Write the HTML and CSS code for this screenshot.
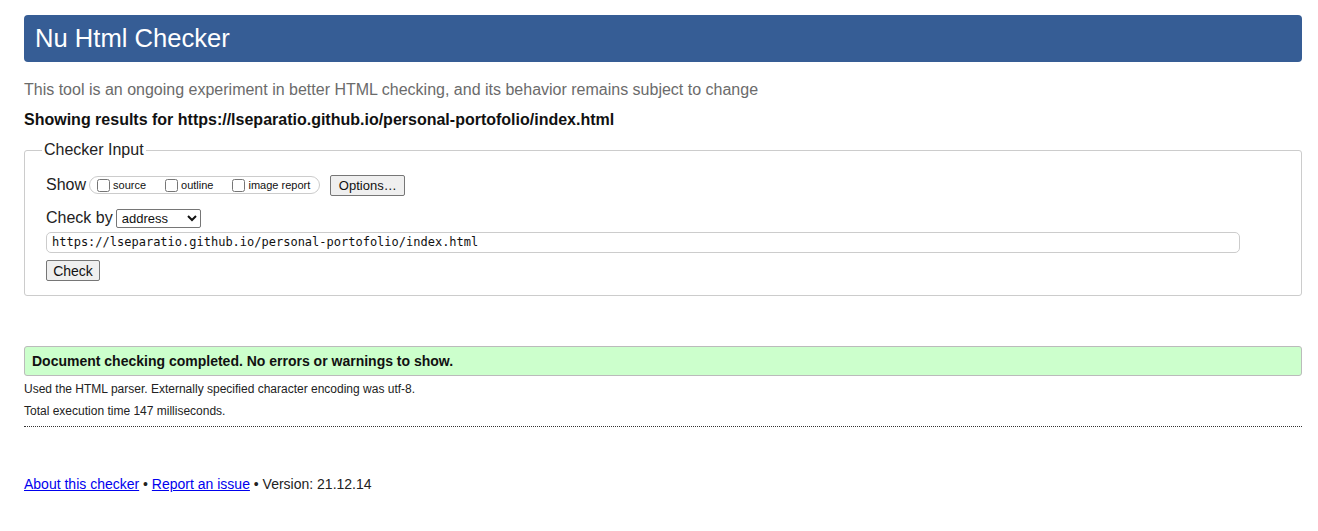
FILE: index.html
```html
<!DOCTYPE html>
<html lang="en">
<head>
<meta charset="utf-8">
<title>Nu Html Checker</title>
<link rel="stylesheet" href="styles.css">
</head>
<body>
<h1 class="title">Nu Html Checker</h1>
<p class="intro">This tool is an ongoing experiment in better HTML checking, and its behavior remains subject to change</p>
<p class="showing">Showing results for https://lseparatio.github.io/personal-portofolio/index.html</p>
<form class="form">
  <fieldset class="checker">
    <legend class="legend">Checker Input</legend>
    <div class="row show-row">
      <span class="label">Show</span>
      <span class="group">
        <label class="opt"><input type="checkbox" class="cb"><span>source</span></label>
        <label class="opt"><input type="checkbox" class="cb"><span>outline</span></label>
        <label class="opt"><input type="checkbox" class="cb"><span>image report</span></label>
      </span>
      <button type="button" class="btn options">Options…</button>
    </div>
    <div class="row by-row">
      <span class="label">Check by</span>
      <select class="select"><option>address</option></select>
    </div>
    <div class="url">https://lseparatio.github.io/personal-portofolio/index.html</div>
    <button type="button" class="btn check">Check</button>
  </fieldset>
</form>
<p class="success">Document checking completed. No errors or warnings to show.</p>
<p class="meta">Used the HTML parser. Externally specified character encoding was utf-8.</p>
<p class="meta meta2">Total execution time 147 milliseconds.</p>
<hr class="dotted">
<p class="footer"><a href="#">About this checker</a> • <a href="#">Report an issue</a> • Version: 21.12.14</p>
</body>
</html>
```
FILE: styles.css
```css
html, body { margin: 0; padding: 0; background: #fff; }
body {
  padding: 15px 16px 0 24px;
  font-family: "Liberation Sans", Arial, sans-serif;
  color: #222;
}
.title {
  margin: 0;
  height: 47px;
  box-sizing: border-box;
  background: #365d95;
  color: #fff;
  border-radius: 4px;
  font-weight: normal;
  font-size: 25.6px;
  line-height: 47px;
  padding-left: 11px;
}
.intro {
  margin: 18px 0 0;
  font-size: 16px;
  line-height: 20px;
  color: #6b6b6b;
}
.showing {
  margin: 10px 0 0;
  font-size: 16px;
  line-height: 20px;
  font-weight: bold;
  color: #111;
}
.form { margin: 11px 0 0; }
.checker {
  margin: 0;
  border: 1px solid #ccc;
  border-radius: 3px;
  padding: 13px 21px 14px 21px;
  height: 155px;
  box-sizing: border-box;
}
.legend {
  font-size: 16px;
  padding: 0 2px;
  margin-left: -4px;
  color: #222;
  line-height: 18px;
}
.row { display: flex; align-items: center; }
.label { font-size: 16px; color: #222; margin-right: 3px; }
.show-row { height: 22px; margin-top: 2px; }
.group {
  display: flex;
  align-items: center;
  height: 18px;
  box-sizing: border-box;
  border: 1px solid #ccc;
  border-radius: 9px;
  padding: 0 9px 0 4px;
  margin-right: 10px;
}
.opt {
  display: flex;
  align-items: center;
  font-size: 11px;
  margin-right: 16px;
  color: #111;
}
.opt:last-child { margin-right: 0; }
.cb { margin: 0 3px 0 3px; width: 13px; height: 13px; }
.btn {
  font-family: "Liberation Sans", Arial, sans-serif;
  background: #efefef;
  border: 1px solid #767676;
  border-radius: 2px;
  color: #111;
  padding: 0 6px;
}
.options { height: 21px; font-size: 13px; width: 75px; }
.by-row { margin-top: 12px; height: 20px; }
.select {
  font-family: "Liberation Sans", Arial, sans-serif;
  font-size: 13px;
  height: 19px;
  width: 85px;
  border: 1px solid #767676;
  border-radius: 2px;
  padding: 0 1px;
  background: #fff;
  color: #111;
}
.url {
  margin-top: 4px;
  width: 1194px;
  height: 21px;
  box-sizing: border-box;
  border: 1px solid #ccc;
  border-radius: 5px;
  font-family: "DejaVu Sans Mono", "Liberation Mono", monospace;
  font-size: 12px;
  line-height: 19px;
  padding-left: 5px;
  color: #111;
}
.check { margin-top: 7px; height: 21px; width: 54px; font-size: 14px; }
.success {
  margin: 50px 0 0;
  height: 30px;
  box-sizing: border-box;
  border: 1px solid #bbb;
  border-radius: 3px;
  background: #ccffcc;
  font-weight: bold;
  font-size: 14px;
  line-height: 28px;
  padding-left: 7px;
  color: #111;
}
.meta {
  margin: 6px 0 0;
  font-size: 12px;
  line-height: 15px;
  color: #222;
}
.meta2 { margin-top: 7px; }
.dotted {
  margin: 7px 0 0;
  border: 0;
  border-top: 1px dotted #333;
  height: 0;
}
.footer {
  margin: 48px 0 0;
  font-size: 14px;
  line-height: 18px;
  color: #222;
}
.footer a { color: #00e; text-decoration: underline; }
```
